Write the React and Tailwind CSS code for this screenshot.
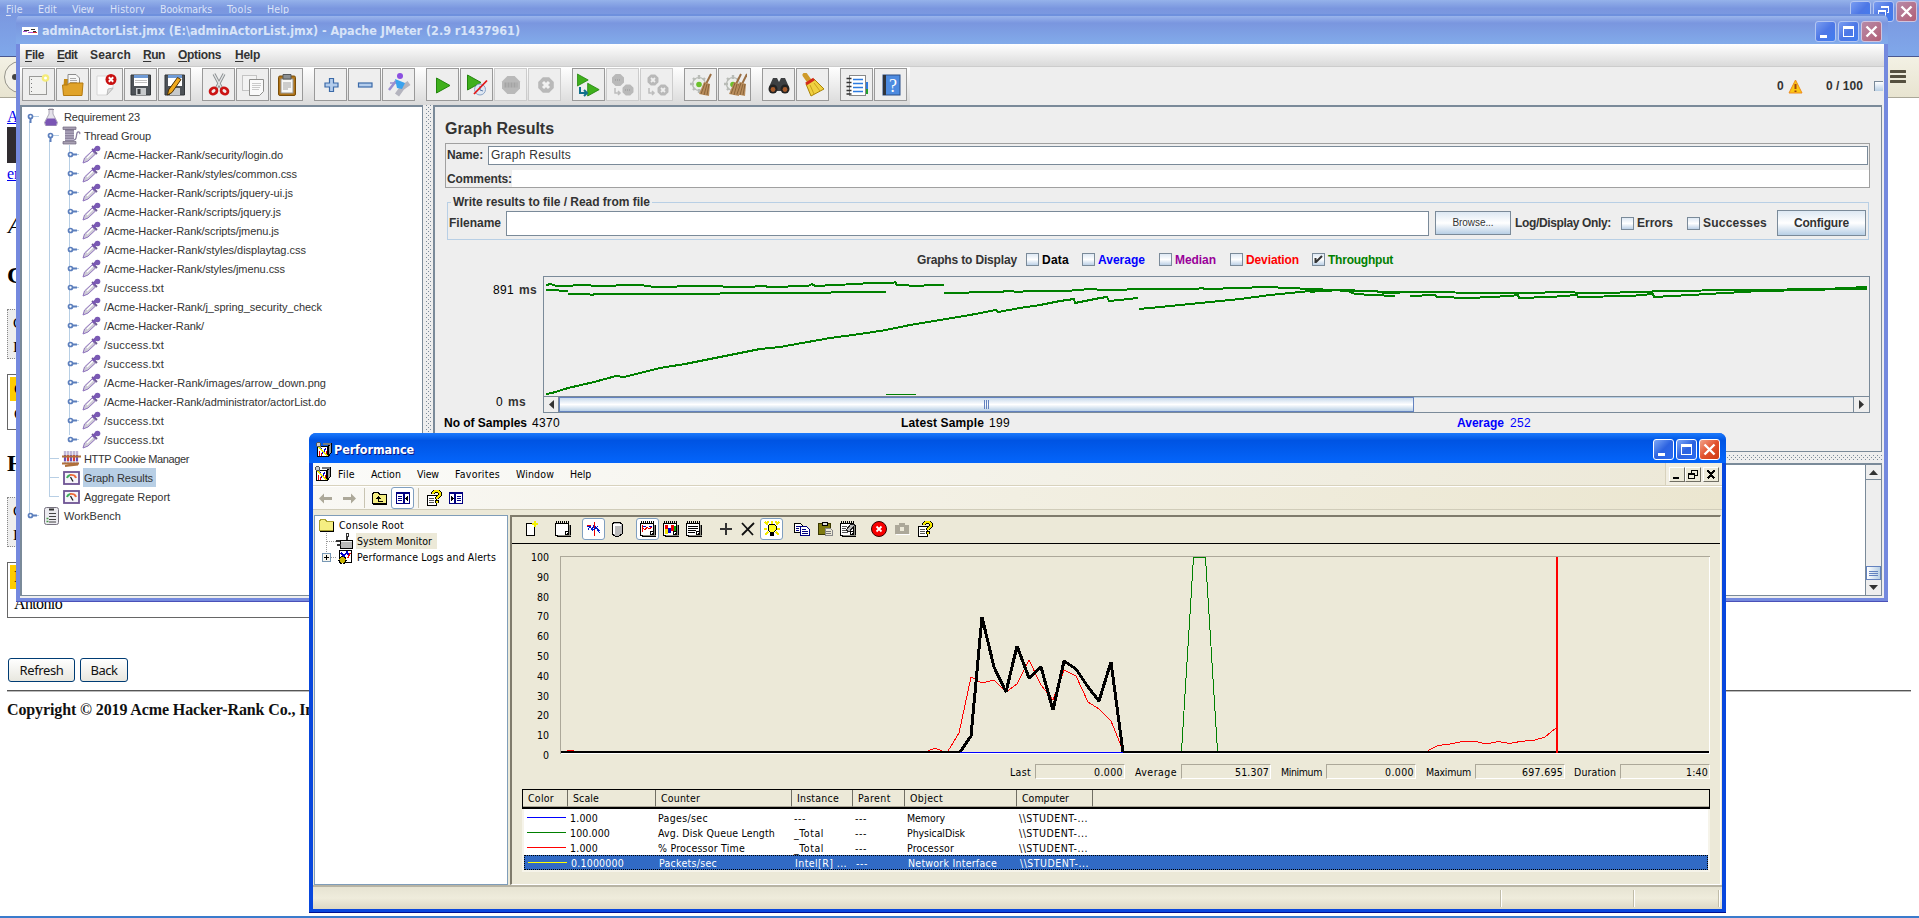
import React, { useLayoutEffect, useRef, useState } from "react";

const TAHOMA = "font-['DejaVu_Sans_Condensed',sans-serif] text-[10.5px]";
const ARIAL = "font-['Liberation_Sans',sans-serif]";
const SERIF = "font-['Liberation_Serif',serif]";

/* Single line of text spaced out to an exact advance width. */
function T({ w, className = "", children }) {
  const ref = useRef(null);
  const [ls, setLs] = useState(0);
  useLayoutEffect(() => {
    const n = ref.current.textContent.length;
    setLs((w - ref.current.getBoundingClientRect().width) / n);
  }, [w]);
  return (
    <span className={`inline-block shrink-0 whitespace-nowrap ${className}`} style={{ width: w }}>
      <span ref={ref} style={{ letterSpacing: ls }}>{children}</span>
    </span>
  );
}

/* ---------- caption buttons ---------- */
function Glyph({ kind }) {
  return (
    <svg width="19" height="19" viewBox="0 0 19 19" fill="none" stroke="#fff" shapeRendering="crispEdges">
      {kind === "min" && <path d="M4 14h7" strokeWidth="3" />}
      {kind === "max" && <path d="M4 5h11M4.500 4v11M14.500 4v11M4 14.500h11" strokeWidth="1.200" />}
      {kind === "max" && <path d="M4 5h11" strokeWidth="3" />}
      {kind === "restore" && <path d="M7 4.500h8M7 5.500h8M14.500 4v7M4 8.500h8M4 9.500h8M4.500 8v7M11.500 8v7M4 14.500h8M13 10.500h2" />}
      {kind === "close" && <path d="M4.500 4.500l10 10M14.500 4.500l-10 10" strokeWidth="2.400" shapeRendering="auto" />}
    </svg>
  );
}
function Cap({ kind, faded }) {
  const blue = faded
    ? "border-[#b3c6f2] bg-linear-to-br from-[#7a9cf0] via-[#4d77e6] to-[#3f7df0]"
    : "border-white bg-linear-to-br from-[#7ea6f5] via-[#2c62e0] to-[#2a6cf0]";
  const red = faded
    ? "border-[#d0c3dd] bg-linear-to-br from-[#b68aa8] to-[#b25f76]"
    : "border-white bg-linear-to-br from-[#f0a088] via-[#e2512c] to-[#cf3a12]";
  return (
    <div className={`flex h-[21px] w-[21px] items-center justify-center rounded-[3px] border ${kind === "close" ? red : blue}`}>
      {kind !== "none" && <Glyph kind={kind} />}
    </div>
  );
}

/* ---------- JMeter icons ---------- */
const S = ({ children, s = 24 }) => (
  <svg width={s} height={s} viewBox="0 0 24 24" fill="none">{children}</svg>
);
const Play = ({ x = 0, y = 0, k = 1 }) => (
  <path transform={`translate(${x} ${y}) scale(${k})`} d="M5.500 5l13.500 7.500-13.500 7.500z" fill="#3fb01c" stroke="#23850d" />
);
const Oct = ({ x, y, r }) => (
  <path transform={`translate(${x} ${y}) scale(${r})`} d="M-.4-1h.8l.6.6v.8l-.6.6h-.8l-.6-.6v-.8z" fill="#b9b9b9" />
);
const Sheet = ({ x, y, w, h }) => (
  <path d={`M${x} ${y}h${w}v${h - 4}l-4 4h-${w - 4}z`} fill="#fafafa" stroke="#8f8f8d" />
);
const Gear = () => (
  <g>
    <circle cx="10" cy="11" r="6.500" fill="#eceeeb" stroke="#b4b7b2" strokeWidth="1.200" />
    <path d="M10 2v4M10 16v4M1 11h4M4 5l2 2M4 17l2-2M16 5l-2 2" stroke="#b9bcb7" strokeWidth="2.400" />
    <circle cx="10" cy="11.500" r="2.800" fill="#6cc02b" />
  </g>
);
const Broom = ({ x = 0 }) => (
  <g transform={`translate(${x} 0)`}>
    <path d="M22 1l-5 10" stroke="#9a6e42" strokeWidth="2" />
    <path d="M15 9l6 2-1 12-10-2z" fill="#b98d5c" />
    <path d="M16 10l-4 11M18 11l-3 11M20 11l-2 11" stroke="#7e5930" strokeWidth=".8" />
  </g>
);
const toolIcons = {
  new: <S><rect x="2.500" y="3.500" width="17" height="18" fill="#f1f1ef" stroke="#9a9a98" /><path d="M4.500 6v14" stroke="#777" strokeDasharray="1 3" /><circle cx="18.500" cy="5" r="3.800" fill="#f5ec7a" /><circle cx="18.500" cy="5" r="1.500" fill="#fff" /></S>,
  open: <S><path d="M3 6h5l2 2h9v13H2z" fill="#c78a12" /><path d="M7 1.500h8l3.500 3.500v9H7z" fill="#f7f7f7" stroke="#8c8c8c" /><path d="M9 5.500h6M9 7.500h7M9 9.500h7" stroke="#aaa" /><path d="M1.500 12h5l2-2h13.500l-1 12.500h-18.500z" fill="#e0a32a" stroke="#b47a10" /></S>,
  close: <S><path d="M2 3h16v13l-6 6H2z" fill="#fbfbfb" stroke="#d6d6d6" /><path d="M12 22l1-6 5-1z" fill="#ddd" stroke="#bbb" /><circle cx="16" cy="6.500" r="5.500" fill="#c81010" /><path d="M13.800 4.300l4.400 4.400M18.200 4.300l-4.400 4.400" stroke="#fff" strokeWidth="2" /></S>,
  save: <S><path d="M2 2h19.500v20H2z" fill="#4d5257" stroke="#33373a" /><path d="M5 2h14v11H5z" fill="#fff" /><path d="M5 2h14v3H5z" fill="#6f9bd6" /><path d="M6 7.500h12M6 9.500h12" stroke="#c0c0c0" /><path d="M7 15h10v7H7z" fill="#c6c9cb" /><path d="M8.500 16h3v5h-3z" fill="#3b3f42" /></S>,
  saveAs: <S><path d="M2 2h19.500v20H2z" fill="#4d5257" stroke="#33373a" /><path d="M5 2h14v11H5z" fill="#fff" /><path d="M5 2h14v3H5z" fill="#6f9bd6" /><path d="M7 15h10v7H7z" fill="#c6c9cb" /><path d="M14.500 4.500l3.500 2-9 13-4.500 2.500 1-5z" fill="#f0a91e" stroke="#4b2f04" /></S>,
  cut: <S><path d="M7 1l8 15M17 1L9 16" stroke="#8c9092" strokeWidth="3.200" /><path d="M7 1l8 15M17 1L9 16" stroke="#e2e4e5" strokeWidth="1.400" /><ellipse cx="6.500" cy="18" rx="3.600" ry="3" stroke="#cc1414" strokeWidth="2.800" transform="rotate(-35 6.500 18)" /><ellipse cx="17.500" cy="18" rx="3.600" ry="3" stroke="#cc1414" strokeWidth="2.800" transform="rotate(35 17.500 18)" /></S>,
  copy: <S><rect x="1.500" y="2.500" width="14" height="15" fill="#f3f3f3" stroke="#c4c4c4" /><Sheet x={8.5} y={6.5} w={14} h={16} /><path d="M11 10.500h9M11 12.500h9M11 14.500h8M11 16.500h7" stroke="#c9c9c9" /></S>,
  paste: <S><rect x="3.500" y="3" width="17" height="19.500" rx="1.500" fill="#b07418" stroke="#7a4d08" /><rect x="6" y="6" width="12" height="14" fill="#f7f7f5" stroke="#999" /><path d="M8 1.500h8V6H8z" fill="#8b8f92" stroke="#55585a" /><path d="M8 10h8M8 12h8M8 14h8M8 16h5" stroke="#a2a2a2" /></S>,
  plus: <S><path d="M10.500 5.500h4v4.500h4.500v4h-4.500v4.500h-4V14H6v-4h4.500z" fill="#b4cdec" stroke="#3b6aa8" strokeWidth="1.200" /></S>,
  minus: <S><rect x="5.500" y="10" width="13.500" height="4" fill="#b4cdec" stroke="#3b6aa8" strokeWidth="1.200" /></S>,
  toggle: <S><path d="M22 10l-7 5-5 7" stroke="#b4b4be" strokeWidth="5" /><path d="M9 8L2 17" stroke="#9a8ed0" strokeWidth="2.500" /><path d="M3 10h7" stroke="#9a8ed0" strokeWidth="1.500" /><circle cx="13" cy="3" r="3" fill="#8b4fe0" /><path d="M8 6l10 4-3 6-5-1z" fill="#3aa2ee" /></S>,
  start: <S><Play /></S>,
  startNo: <S><Play x={-3} y={-3} /><circle cx="15" cy="16.500" r="5.500" fill="#dfe7f2" stroke="#8ba4c6" /><path d="M15 13v4l3 1" stroke="#5d7dab" /><path d="M22 7.500L9 21" stroke="#e01515" strokeWidth="1.800" /></S>,
  stop: <S><Oct x={12} y={12} r={9} /><path d="M5.500 12h13" stroke="#a4a4a4" strokeWidth="5" strokeDasharray="2 1" /></S>,
  shut: <S><Oct x={13} y={12} r={7.800} /><path d="M10 9l6 6M16 9l-6 6" stroke="#f1f1f1" strokeWidth="3" /></S>,
  rStart: <S><Play x={-4} y={-3} k={0.8} /><Play x={6} y={6} k={0.85} /><path d="M3 14v6h6M7 17l3 3-3 3" stroke="#11708c" strokeWidth="2" /></S>,
  rStop: <S><Oct x={7} y={7} r={6} /><Oct x={17} y={17} r={5.5} /><path d="M4 15v5h5M7 18l2 2-2 2" stroke="#bdbdbd" strokeWidth="1.500" /><path d="M4 7h6M14 17h6" stroke="#a6a6a6" strokeWidth="2" strokeDasharray="1 1" /></S>,
  rShut: <S><Oct x={8} y={7} r={5.5} /><Oct x={18} y={17} r={5.5} /><path d="M4 15v5h5M7 18l2 2-2 2" stroke="#bdbdbd" strokeWidth="1.500" /><path d="M6 5l4 4M10 5l-4 4M16 15l4 4M20 15l-4 4" stroke="#efefef" strokeWidth="1.800" /></S>,
  clear: <S><Gear /><Broom /></S>,
  clearAll: <S><Gear /><Broom x={-4} /><Broom x={2} /></S>,
  find: <S><path d="M2 14l4-9h4l2 4 2-4h4l4 9v4H2z" fill="#3d4042" /><circle cx="6" cy="16" r="4.500" fill="#222" /><circle cx="18" cy="16" r="4.500" fill="#222" /><circle cx="6" cy="16.500" r="2.400" fill="#a55a2a" /><circle cx="18" cy="16.500" r="2.400" fill="#a55a2a" /></S>,
  reset: <S><path d="M4 2l5 7" stroke="#cf9a2a" strokeWidth="5" strokeLinecap="round" /><path d="M5 11l8-5 10 10-13 7z" fill="#f0d040" stroke="#a88209" /><path d="M5 11l8-5" stroke="#d42a1a" strokeWidth="3" /><path d="M9 12l4 9M13 10l6 8" stroke="#c9a21c" /></S>,
  func: <S><rect x="20" y="9" width="3" height="7" fill="#2d7be0" /><rect x="20" y="16" width="3" height="5" fill="#21a02c" /><rect x="4.500" y="2.500" width="16" height="20" fill="#fff" stroke="#888" /><path d="M8 6.500h10M8 10.500h10M8 14.500h10M8 18.500h10" stroke="#2d7be0" strokeWidth="1.500" /><path d="M1.500 5.500h5M1.500 9.500h5M1.500 13.500h5M1.500 17.500h5M1.500 21h5" stroke="#333" strokeWidth="1.500" /></S>,
  help: <S><rect x="4" y="2" width="17" height="20" fill="#4d8be0" stroke="#2a4f88" /><rect x="4" y="2" width="3" height="20" fill="#30343a" /><text x="14" y="18.500" textAnchor="middle" fontFamily="Liberation Serif" fontSize="18" fill="#fff">?</text></S>,
};
const toolGroups = [
  ["new", "open", "close", "save", "saveAs"],
  ["cut", "copy", "paste"],
  ["plus", "minus", "toggle"],
  ["start", "startNo", "stop", "shut"],
  ["rStart", "rStop", "rShut"],
  ["clear", "clearAll"],
  ["find", "reset"],
  ["func", "help"],
];
const disabled = ["stop", "shut", "rStop", "rShut"];

function Handle({ open }) {
  return (
    <svg width="13" height="19" viewBox="0 0 13 19" fill="none">
      {open ? <path d="M5 9.500h8" stroke="#b8cfe5" /> : <path d="M9 9.500h4" stroke="#b8cfe5" />}
      {open ? <path d="M4.500 11v5" stroke="#5c7fbd" strokeWidth="2" /> : <path d="M6 9.500h5" stroke="#5c7fbd" strokeWidth="2" />}
      <circle cx="4.500" cy="9.500" r="2" fill="#fff" stroke="#5c7fbd" strokeWidth="1.700" />
    </svg>
  );
}
const treeIcons = {
  flask: <svg width="14" height="18" viewBox="0 0 14 18"><path d="M5 1h4v5l4.500 8.500-1 3h-11l-1-3L5 6z" fill="#e4e2ea" stroke="#9a96a6" strokeWidth=".8" /><path d="M3 10.500h8l2 4-1 3H2l-1-3z" fill="#7a55b4" /><path d="M4 1.500h6" stroke="#8a8694" /></svg>,
  spool: <svg width="19" height="19" viewBox="0 0 19 19"><path d="M3 3h9v12H3z" fill="#8f86a0" /><path d="M3 6h9M3 8.500h9M3 11h9M3 13.500h9" stroke="#b8b0c6" /><path d="M1 1h13v2.500H1zM1 15.500h13V18H1z" fill="#a79fb2" stroke="#6e667c" strokeWidth=".7" /><path d="M12 14c4 0 1-9 5-8 1 .4 1 1.500.5 2" fill="none" stroke="#8a7fa0" strokeWidth="1.300" /></svg>,
  dropper: <svg width="19" height="19" viewBox="0 0 19 19"><path d="M1 18l1.500-5L10 6l3.500 3-7.500 7z" fill="#cfccd6" stroke="#8e72bd" strokeWidth="1" /><path d="M5 13l6-6" stroke="#fff" strokeWidth="1.300" /><path d="M10 4l5 5" stroke="#6d5a90" strokeWidth="1.800" /><path d="M11 6.500l4-4" stroke="#7a55b4" strokeWidth="3" /><circle cx="15.500" cy="3.500" r="2.800" fill="#7a5ab4" /></svg>,
  cookie: <svg width="19" height="17" viewBox="0 0 19 17"><path d="M3 1v12M6 1v12M9 1v12M12 1v12M15 1v12" stroke="#c0b8d8" strokeWidth="2.400" /><path d="M3 5v6M9 5v6M15 5v6" stroke="#6a4fb4" strokeWidth="2" /><path d="M6 5v6M12 5v6" stroke="#d83a3a" strokeWidth="2" /><path d="M0 6.500h19M0 13.500h17M3 16l13-1.500" stroke="#b0703a" strokeWidth="2" /></svg>,
  gauge: <svg width="17" height="14" viewBox="0 0 17 14"><rect x="1" y="1" width="15" height="12" fill="#f6f4fa" stroke="#6e5494" strokeWidth="1.800" /><path d="M4 7a5 4 0 0 1 3-3" stroke="#3fae5c" strokeWidth="2" fill="none" /><path d="M7 4a5 4 0 0 1 6 3" stroke="#ee6a3a" strokeWidth="2" fill="none" /><path d="M7.500 6l2.500 4.500" stroke="#222" strokeWidth="1.300" /></svg>,
  bench: <svg width="15" height="18" viewBox="0 0 15 18"><rect x=".5" y=".5" width="14" height="17" rx="2" fill="#ecebf0" stroke="#77727f" /><path d="M5 2.500h5" stroke="#333" strokeWidth="2" /><path d="M5 6.500h7M5 9.500h7M5 12.500h7M5 15h7" stroke="#444" strokeWidth="1.200" /><path d="M2.500 11.500h2M2.500 14.500h2" stroke="#4a9a4a" strokeWidth="1.400" /></svg>,
};
const samplers = [
  ["/Acme-Hacker-Rank/security/login.do", 179],
  ["/Acme-Hacker-Rank/styles/common.css", 193],
  ["/Acme-Hacker-Rank/scripts/jquery-ui.js", 189],
  ["/Acme-Hacker-Rank/scripts/jquery.js", 177],
  ["/Acme-Hacker-Rank/scripts/jmenu.js", 175],
  ["/Acme-Hacker-Rank/styles/displaytag.css", 202],
  ["/Acme-Hacker-Rank/styles/jmenu.css", 181],
  ["/success.txt", 60],
  ["/Acme-Hacker-Rank/j_spring_security_check", 218],
  ["/Acme-Hacker-Rank/", 100],
  ["/success.txt", 60],
  ["/success.txt", 60],
  ["/Acme-Hacker-Rank/images/arrow_down.png", 222],
  ["/Acme-Hacker-Rank/administrator/actorList.do", 222],
  ["/success.txt", 60],
  ["/success.txt", 60],
];

function Node({ level, icon, label, w, handle, selected }) {
  const pad = level === 0 ? "pl-[4px]" : level === 1 ? "pl-[24px]" : "pl-[44px]";
  return (
    <div className={`flex h-[19px] items-center ${pad}`}>
      <span className="w-[13px] shrink-0">
        {handle ? <Handle open={handle === "open"} /> : <svg width="13" height="19"><path d="M4 9.500h9" stroke="#b8cfe5" /></svg>}
      </span>
      <span className="flex w-[24px] shrink-0 items-center justify-center">{treeIcons[icon]}</span>
      <span className={`flex h-[19px] items-center pl-px ${selected ? "bg-[#b8cfe5] pr-[3px]" : ""}`}><T w={w}>{label}</T></span>
    </div>
  );
}

function JTree() {
  return (
    <div className="relative h-full w-[403px] border-l-2 border-t-2 border-r border-b border-[#7a8a99] bg-white text-[11px] text-[#333]">
      <svg className="absolute left-0 top-0" width="120" height="460" stroke="#b8cfe5">
        <path d="M7.500 14v392M27.500 33v357M47.500 38v290" />
      </svg>
      <div className="relative">
        <Node level={0} icon="flask" label="Requirement 23" w={76} handle="open" />
        <Node level={1} icon="spool" label="Thread Group" w={67} handle="open" />
        {samplers.map(([s, w], i) => <Node key={i} level={2} icon="dropper" label={s} w={w} handle="closed" />)}
        <Node level={1} icon="cookie" label="HTTP Cookie Manager" w={105} />
        <Node level={1} icon="gauge" label="Graph Results" w={69} selected />
        <Node level={1} icon="gauge" label="Aggregate Report" w={86} />
        <Node level={0} icon="bench" label="WorkBench" w={57} handle="closed" />
      </div>
    </div>
  );
}

function Check({ on }) {
  return (
    <span className="flex h-[13px] w-[13px] shrink-0 items-center justify-center border border-[#7a8a99] bg-linear-to-b from-[#dfe9f4] via-white to-[#bcd0e6]">
      {on && <svg width="9" height="9" viewBox="0 0 9 9" fill="none" stroke="#333" strokeWidth="2"><path d="M1.500 3v5M2 7l6-6" /></svg>}
    </span>
  );
}

const throughput = [
  "546,285 551,284 556,286 590,285 592,286 640,285 655,287 700,286 746,287 765,286 768,287 808,286 812,284 815,286 856,284 862,284 864,283 893,283 895,282 897,285 920,286 928,285 944,285",
  "546,290 558,290 560,291 568,291",
  "568,294 588,294 592,295 595,294 718,294 722,293 830,293 832,292 886,292",
  "944,293 968,293 970,292 1002,292 1005,291 1022,292 1024,291 1066,291 1090,289 1104,290 1150,289 1198,289 1200,288 1207,289 1240,288 1265,287 1290,288 1310,289 1335,290 1374,291 1380,292 1530,293 1560,292 1590,293 1650,292 1655,291 1750,290 1825,289 1867,287",
  "546,394 552,393 568,388 594,382 616,376 624,377 660,368 685,364 700,361 730,355 760,349 780,347 830,338 860,334 886,330 910,325 940,320 970,315 996,310 998,312 1020,308 1040,305 1060,301 1074,299 1075,303 1085,301 1100,298 1107,297 1109,301 1120,300 1138,298",
  "1139,309 1160,307 1200,303 1240,299 1270,295 1300,292 1310,291 1320,291 1345,290 1355,294 1372,295 1395,296",
  "1410,296 1435,295 1437,297 1470,298 1510,296 1518,295 1519,298 1550,297 1577,295 1578,297 1630,296 1653,294 1654,297 1690,295 1725,293 1760,291 1810,290 1840,289 1867,289",
  "1310,292 1330,290 1350,291 1375,291 1385,293 1400,293",
];

function HScroll() {
  return (
    <div className="flex h-[16px] w-full border-t border-[#7a8a99]">
      <div className="flex w-[15px] items-center justify-center border-r border-[#7a8a99] bg-[#eee]"><svg width="5" height="9"><path d="M5 0v9L0 4.500z" fill="#333" /></svg></div>
      <div className="flex w-[855px] items-center justify-center border border-[#6382bf] bg-linear-to-b from-[#c9daec] via-white to-[#b8cfe5]">
        <svg width="7" height="9" stroke="#6382bf"><path d="M1.500 0v9M3.500 0v9M5.500 0v9" /></svg>
      </div>
      <div className="flex-1 border-t border-[#b8cfe5] bg-[#eee]" />
      <div className="flex w-[16px] items-center justify-center border-l border-[#7a8a99] bg-[#eee]"><svg width="5" height="9"><path d="M0 0v9l5-4.500z" fill="#333" /></svg></div>
    </div>
  );
}

function GraphResults() {
  return (
    <div className="flex h-[347px] w-[1449px] flex-col border-l-2 border-t-2 border-r border-b border-[#7a8a99] bg-[#eee] text-[12px] font-bold text-[#333]">
      <div className="flex h-[36px] shrink-0 items-center pl-[10px] pt-[7px] text-[16px]"><T w={109}>Graph Results</T></div>
      <div className="ml-[10px] flex h-[45px] w-[1425px] shrink-0 flex-col border border-[#a0a0a0] pl-px">
        <div className="flex h-[22px] items-center">
          <T w={36}>Name:</T>
          <div className="ml-auto mr-px flex h-[19px] w-[1380px] items-center border border-[#7a8a99] bg-white pl-[2px] font-normal text-[#333]"><T w={80}>Graph Results</T></div>
        </div>
        <div className="mt-auto flex h-[17px] items-center">
          <T w={65}>Comments:</T>
          <div className="h-full flex-1 bg-white" />
        </div>
      </div>
      <fieldset className="ml-[12px] mt-[7px] h-[45px] w-[1422px] shrink-0 border border-[#b8cfe5]">
        <legend className="ml-[3px] flex h-[14px] items-center px-[2px]"><T w={197}>Write results to file / Read from file</T></legend>
        <div className="flex h-[28px] items-center pl-px">
          <T w={52}>Filename</T>
          <div className="ml-[5px] h-[25px] w-[923px] border border-[#7a8a99] bg-white" />
          <div className="ml-[6px] flex h-[24px] w-[76px] items-center justify-center border border-[#7a8a99] bg-linear-to-b from-[#dde8f3] via-white to-[#b8cfe5] text-[10px] font-normal"><T w={41}>Browse...</T></div>
          <T w={96} className="ml-[4px]">Log/Display Only:</T>
          <span className="ml-[10px] flex items-center gap-[3px]"><Check /><T w={36}>Errors</T></span>
          <span className="ml-[14px] flex items-center gap-[3px]"><Check /><T w={64}>Successes</T></span>
          <div className="ml-[10px] flex h-[26px] w-[89px] items-center justify-center border border-[#7a8a99] bg-linear-to-b from-[#dde8f3] via-white to-[#b8cfe5]"><T w={55}>Configure</T></div>
        </div>
      </fieldset>
      <div className="flex h-[36px] shrink-0 items-center pl-[482px] pt-[3px]">
        <T w={100}>Graphs to Display</T>
        <span className="ml-[9px] flex items-center gap-[3px] text-black"><Check /><T w={27}>Data</T></span>
        <span className="ml-[13px] flex items-center gap-[3px] text-[#0000ff]"><Check /><T w={47}>Average</T></span>
        <span className="ml-[14px] flex items-center gap-[3px] text-[#990099]"><Check /><T w={41}>Median</T></span>
        <span className="ml-[14px] flex items-center gap-[3px] text-[#ff0000]"><Check /><T w={53}>Deviation</T></span>
        <span className="ml-[13px] flex items-center gap-[3px] text-[#008000]"><Check on /><T w={65}>Throughput</T></span>
      </div>
      <div className="flex h-[137px] shrink-0">
        <div className="flex w-[108px] shrink-0 flex-col justify-between pb-[4px] pt-[7px]">
          <div className="flex h-[14px] items-center gap-[5px] pl-[58px]"><T w={21} className="font-normal text-black">891</T><T w={18}>ms</T></div>
          <div className="flex h-[14px] items-center gap-[5px] pl-[61px]"><T w={7} className="font-normal text-black">0</T><T w={18}>ms</T></div>
        </div>
        <div className="flex w-[1327px] flex-col border border-[#7a8a99]">
          <svg width="1325" height="119" viewBox="544 277 1325 119" fill="none" stroke="#008000" strokeWidth="2" shapeRendering="crispEdges">
            {throughput.map((p, i) => <polyline key={i} points={p} />)}
            <path d="M886 394.500h30" strokeWidth="1" />
          </svg>
          <HScroll />
        </div>
      </div>
      <div className="flex h-[20px] shrink-0 items-center pl-[9px] text-black">
        <T w={83}>No of Samples</T><T w={28} className="ml-[5px] font-normal">4370</T>
        <T w={83} className="ml-[341px]">Latest Sample</T><T w={21} className="ml-[5px] font-normal">199</T>
        <T w={47} className="ml-[447px] text-[#0000ff]">Average</T><T w={21} className="ml-[6px] font-normal text-[#0000ff]">252</T>
      </div>
    </div>
  );
}

const jmenu = [["F", "ile", 19, "w-[32px]"], ["E", "dit", 20, "w-[33px]"], ["", "Search", 41, "w-[53px]"], ["R", "un", 22, "w-[35px]"], ["O", "ptions", 43, "w-[57px]"], ["H", "elp", 25, "w-[30px]"]];

function JMeter() {
  return (
    <div className={`absolute left-[16px] top-[14px] flex h-[588px] w-[1872px] flex-col overflow-hidden rounded-t-[7px] border-b border-[#4a50b8] bg-[#7489de] ${ARIAL}`}>
      <div className="flex h-[30px] shrink-0 items-center border-t-2 border-[#6e90dd] bg-linear-to-b from-[#9ab5ec] via-[#7a96df] via-25% to-[#82abea] pl-[6px] pr-[6px] pt-[2px]">
        <svg width="16" height="8" shapeRendering="crispEdges"><path d="M0 0h16v8H0z" fill="#fff" /><path d="M2 3h5M9 2h4M11 4h3" stroke="#333" /><path d="M1 4.500h4M6 5.500h6" stroke="#b050d0" /><path d="M11 5.500h4" stroke="#e03030" /></svg>
        <T w={478} className="ml-[4px] font-['DejaVu_Sans_Condensed',sans-serif] text-[12.5px] font-bold text-[#d8e4f8]">adminActorList.jmx (E:\adminActorList.jmx) - Apache JMeter (2.9 r1437961)</T>
        <div className="ml-auto flex gap-[2px] pt-px"><Cap kind="min" faded /><Cap kind="max" faded /><Cap kind="close" faded /></div>
      </div>
      <div className="mx-[4px] flex h-[554px] shrink-0 flex-col bg-[#eee]">
        <div className="flex h-[23px] shrink-0 items-center border-b border-[#ccc] bg-linear-to-b from-white to-[#dadada] pl-[5px] text-[12px] font-bold text-[#333]">
          {jmenu.map(([u, rest, w, box]) => (
            <span key={rest} className={`shrink-0 ${box}`}><T w={w}><span className="underline underline-offset-2">{u}</span>{rest}</T></span>
          ))}
        </div>
        <div className="flex h-[38px] shrink-0">
          <div className="flex w-[890px] items-start gap-[11px] bg-linear-to-b from-white to-[#dadada] pl-[2px] pt-px">
            {toolGroups.map((g) => (
              <div key={g[0]} className="flex gap-px">
                {g.map((n) => (
                  <div key={n} className={`flex h-[33px] w-[33px] items-center justify-center border bg-[#eee] ${disabled.includes(n) ? "border-[#ccc]" : "border-[#999]"}`}>{toolIcons[n]}</div>
                ))}
              </div>
            ))}
          </div>
          <div className="flex flex-1 items-center text-[12px] font-bold text-[#333]">
            <T w={7} className="ml-[867px]">0</T>
            <svg className="ml-[4px]" width="15" height="15" viewBox="0 0 15 15"><path d="M7.500 1l6.500 13H1z" fill="#fbc712" stroke="#ee8a1c" strokeLinejoin="round" /><path d="M7.500 5v5M7.500 11.500v1.500" stroke="#a1440c" strokeWidth="2" /></svg>
            <T w={37} className="ml-[23px]">0 / 100</T>
            <div className="ml-[11px] h-[10px] w-[9px] border-l border-t border-[#7a8a99] bg-linear-to-b from-white to-[#b8cfe5]" />
          </div>
        </div>
        <div className="flex min-h-0 flex-1">
          <div className="h-[491px]"><JTree /></div>
          <div className="w-[10px] px-[3px]"><svg width="5" height="491"><defs><pattern id="dv" width="4" height="4" patternUnits="userSpaceOnUse"><path d="M0 0h1v1H0zM2 2h1v1H2z" fill="#7a8a99" /></pattern></defs><rect width="5" height="491" fill="url(#dv)" /></svg></div>
          <div className="flex w-[1451px] flex-col">
            <GraphResults />
            <div className="h-[11px] pt-[3px]"><svg width="1449" height="6"><rect width="1449" height="6" fill="url(#dv)" /></svg></div>
            <div className="flex h-[133px] w-[1449px] justify-end border border-t-2 border-[#7a8a99] bg-white">
              <div className="flex w-[16px] flex-col border-l border-[#7a8a99] bg-[#eee]">
                <div className="flex h-[15px] items-center justify-center border-b border-[#7a8a99]"><svg width="9" height="5"><path d="M0 5h9L4.500 0z" fill="#333" /></svg></div>
                <div className="h-[86px]" />
                <div className="flex h-[14px] items-center justify-center border border-[#6382bf] bg-linear-to-r from-white to-[#b8cfe5]"><svg width="9" height="7" stroke="#6382bf"><path d="M0 1.500h9M0 3.500h9M0 5.500h9" /></svg></div>
                <div className="flex flex-1 items-center justify-center"><svg width="9" height="5"><path d="M0 0h9L4.500 5z" fill="#333" /></svg></div>
              </div>
            </div>
          </div>
        </div>
      </div>
    </div>
  );
}

/* ---------- Performance console icons ---------- */
const P = ({ children }) => <svg width="16" height="16" viewBox="0 0 16 16" fill="none" shapeRendering="crispEdges">{children}</svg>;
const PerfLogo = () => (
  <P><path d="M1.500 4.500h10v10h-10z" fill="#fff" stroke="#000" /><path d="M12 4l3-2v9l-3 4z" fill="#999" stroke="#000" /><path d="M3 14V9M5 14v-3M8 12v-3M10 14v-5" stroke="#e00" /><path d="M5 6l2 5 3-5" stroke="#00c" strokeWidth="1.300" /><path d="M3 5l8 9" stroke="#ee0" strokeWidth="1.500" /><path d="M1 2l4 3M7 2.500l8-1" stroke="#777" strokeWidth="2" /><circle cx="2.500" cy="2.500" r="2" fill="#ccc" stroke="#555" /></P>
);
const Pad = ({ children }) => (
  <P><path d="M2 4h14v12H2z" fill="#000" /><path d="M.5 2.500h13v9l-3 3H.5z" fill="#fff" stroke="#000" /><path d="M3 14.500h13M14.500 4v11" stroke="#8a8a80" /><path d="M10.500 14v-3.500h3" stroke="#000" /><path d="M1 1.500h13" stroke="#000" strokeWidth="3" strokeDasharray="1 1" />{children}</P>
);
const HelpDoc = () => (
  <P><path d="M1 5h9v10H1z" fill="#fff" stroke="#000" /><path d="M3 8.500h5M3 10.500h5M3 12.500h5" stroke="#555" /><path d="M7 4c0-4 7-4 7 0 0 3-3 2-3 5M11 10v3" stroke="#000" strokeWidth="4" /><path d="M7 4c0-4 7-4 7 0 0 3-3 2-3 5M11 10.500v2" stroke="#f4e800" strokeWidth="2" /></P>
);
const Folder = ({ up }) => (
  <P><path d="M.5 4.500l1-2h5l1 2h7v9H.5z" fill="#f5ee82" stroke={up ? "#000" : "#a8a030"} /><path d="M14.500 5v9.500H1" stroke="#000" />{up && <path d="M6 11.500h5M6.500 11V6M4 8.500h5M5 7.500h3" stroke="#000" />}</P>
);
const Pane = ({ flip }) => (
  <P><g transform={flip ? "translate(16 0) scale(-1 1)" : undefined}><path d="M1.500 2.500h13v11h-13z" fill="#fff" stroke="#000080" /><path d="M1 3h14" stroke="#000080" strokeWidth="2" /><path d="M8.500 3v11M9.500 3v11" stroke="#000080" /><path d="M3 6.500h4M3 8.500h4M3 10.500h4" stroke="#000080" /><path d="M13 5v7L10 8.500z" fill="#000" /></g></P>
);
const Btn = ({ on, className = "", children }) => (
  <span className={`flex h-[22px] w-[23px] shrink-0 items-center justify-center rounded-[3px] ${on ? "border border-[#7f9fc0] bg-white" : ""} ${className}`}>{children}</span>
);
const Arrow = ({ flip }) => (
  <svg width="13" height="11" viewBox="0 0 13 11"><path transform={flip ? "translate(13 0) scale(-1 1)" : undefined} d="M0 5.500L5 .5v3.500h8v3H5v3.500z" fill="#aca899" /></svg>
);

function SysToolbar() {
  return (
    <div className="flex h-[27px] shrink-0 items-center border-b border-black pb-[3px] pl-[7px]">
      <Btn><P><path d="M3.500 2.500h8v12h-8z" fill="#fff" stroke="#000" /><path d="M9 2.500h6M12 0v6" stroke="#f4f000" strokeWidth="2" /></P></Btn>
      <Btn className="ml-[9px]"><Pad /></Btn>
      <Btn on className="ml-[8px]"><P><path d="M1 5h3l2 4 2-5 2 3 4 5M2 9l3-5" stroke="#0018c8" /><path d="M8.500 1v14" stroke="#e00" /><path d="M6 10l6-5M10 6l4 4" stroke="#0018c8" /><path d="M1 4h4" stroke="#e00" /></P></Btn>
      <Btn><P><path d="M3 3l3-2h4l3 2v10l-3 2H6l-3-2z" fill="#bbb" stroke="#000" /><path d="M4 4h8M5 5v8" stroke="#fff" strokeWidth="2" /></P></Btn>
      <Btn on className="ml-[8px]"><Pad><path d="M2.500 4v7M2 6l3 3 2-3 2 2 3-2" stroke="#e00" strokeWidth="1.300" /><path d="M3 5.500h3M9 5.500h3" stroke="#00c" /></Pad></Btn>
      <Btn><Pad><path d="M2 7h3v6H2z" fill="#f0e000" /><path d="M2 4h3v4H2z" fill="#e00" /><path d="M5 7h3v5H5z" fill="#00c" /><path d="M8 4h3v6H8z" fill="#e00" /><path d="M11 5h2v5h-2z" fill="#0a0" /></Pad></Btn>
      <Btn><Pad><path d="M2 5.500h10M2 7.500h10M2 9.500h8M2 11.500h7" stroke="#000" /></Pad></Btn>
      <Btn className="ml-[9px]"><P><path d="M8 2v12M2 8h12" stroke="#333" strokeWidth="2" /></P></Btn>
      <Btn className="-ml-px"><P><path d="M2 2l11 12M14 2L2 14" stroke="#111" strokeWidth="1.800" shapeRendering="auto" /></P></Btn>
      <Btn on className="ml-px"><P><path d="M1 1l3 3M8 0v3M15 1l-3 3M0 8h3M13 8h3M1 14l3-3M15 14l-3-3M4 0v2M12 0v2" stroke="#f4ec00" strokeWidth="1.500" /><path d="M6 3h4l2 2v4l-2 2H6L4 9V5z" fill="#ffff20" stroke="#000" /><path d="M6 12h4M6 14h4" stroke="#000" strokeWidth="2" /></P></Btn>
      <Btn className="ml-[7px]"><P><path d="M.5 2.500h6l2 2v7h-8z" fill="#fff" stroke="#000" /><path d="M6.500 5.500h6l3 3v6h-9z" fill="#fff" stroke="#000080" /><path d="M2 5.500h4M2 7.500h3M2 9.500h3M8 8.500h4M8 10.500h6M8 12.500h6" stroke="#000080" /></P></Btn>
      <Btn><P><path d="M1.500 2.500h12v11h-12z" fill="#7f7b10" stroke="#3a3800" /><path d="M5 1h5v3H5z" fill="#ddd" stroke="#000" /><path d="M8 7h5l2 2v5H8z" fill="#ece9d8" stroke="#888" /><path d="M9 10.500h5M9 12.500h5" stroke="#777" /></P></Btn>
      <Btn><Pad><path d="M2 5.500h5M2 7.500h4M2 9.500h4M2 11.500h6" stroke="#555" /><path d="M6 9l5-6 4 1-6 7z" fill="#bbb" stroke="#222" /></Pad></Btn>
      <Btn className="ml-[8px]"><svg width="16" height="16" viewBox="0 0 16 16"><circle cx="8" cy="8" r="7.500" fill="#f80000" stroke="#300" /><path d="M5.500 5.500l5 5M10.500 5.500l-5 5" stroke="#fff" strokeWidth="1.800" /></svg></Btn>
      <Btn><P><path d="M1 4h4V2h6v2h4v9H1z" fill="#aca899" /><path d="M6 6h4v4H6z" fill="#ece9d8" /><path d="M2 13.500h14V5" stroke="#fff" /></P></Btn>
      <Btn><HelpDoc /></Btn>
    </div>
  );
}

const stats = [["Last", 21, "0.000", 29, ""], ["Average", 42, "51.307", 34, "ml-[10px]"], ["Minimum", 41, "0.000", 29, "ml-[10px]"], ["Maximum", 45, "697.695", 41, "ml-[10px]"], ["Duration", 42, "1:40", 22, "ml-[9px]"]];
const cols = ["w-[45px]", "w-[88px]", "w-[136px]", "w-[61px]", "w-[52px]", "w-[112px]", "w-[76px]"];
const heads = [["Color", 26], ["Scale", 26], ["Counter", 39], ["Instance", 42], ["Parent", 33], ["Object", 33], ["Computer", 47]];
const rows = [
  ["#0000ff", [["1.000", 28], ["Pages/sec", 50], ["---", 12], ["---", 12], ["Memory", 38], ["\\\\STUDENT-...", 69]]],
  ["#008000", [["100.000", 40], ["Avg. Disk Queue Length", 117], ["_Total", 30], ["---", 12], ["PhysicalDisk", 58], ["\\\\STUDENT-...", 69]]],
  ["#ff0000", [["1.000", 28], ["% Processor Time", 87], ["_Total", 30], ["---", 12], ["Processor", 47], ["\\\\STUDENT-...", 69]]],
  ["#ffff00", [["0.1000000", 53], ["Packets/sec", 58], ["Intel[R] ...", 52], ["---", 12], ["Network Interface", 89], ["\\\\STUDENT-...", 69]]],
];

function Chart() {
  return (
    <svg className="mt-[6px]" width="1150" height="199" viewBox="560 556 1150 199" fill="none" shapeRendering="crispEdges">
      <path d="M560.500 754V556.500H1710" stroke="#aca899" />
      <path d="M1709.500 557v197M561 753.500h1149" stroke="#fff" />
      <path d="M960 752.500h163" stroke="#0000ff" />
      <polyline points="1181.500,751 1193.500,557.500 1205.500,557.500 1217.500,751" stroke="#008000" />
      <g stroke="#ff0000">
        <path d="M567 750.500h7" strokeWidth="2" />
        <polyline points="928,750.500 935,748.500 942,750.500" />
        <polyline points="948,751 959,733 971,677 982,683 994,680 1006,692 1017,684 1029,660 1041,685 1053,700 1064,670 1076,676 1088,702 1099,709 1111,721 1122,748" />
        <polyline points="1428,750.500 1438,745.500 1450,744 1462,741.500 1476,741.500 1486,744 1498,741.500 1510,743.500 1520,741.500 1535,740 1545,737 1556,728" />
      </g>
      <g stroke="#000" strokeWidth="2">
        <path d="M561 752h399M1123 752h586" />
        <polyline strokeWidth="3" strokeLinejoin="bevel" points="960,752 971,736 982,617 994,667 1006,692 1017,646 1029,678 1041,667 1053,710 1064,661 1076,669 1088,687 1099,701 1111,662 1123,752" />
      </g>
      <path d="M1557 557v196" stroke="#ff0000" strokeWidth="2" />
    </svg>
  );
}

function SystemMonitor() {
  return (
    <div className="flex h-[370px] w-[1211px] flex-col border-l-2 border-t-2 border-r border-b border-[#7f7b6c] border-r-white border-b-white bg-[#ece9d8]">
      <SysToolbar />
      <div className="flex h-[218px] shrink-0 pt-[6px]">
        <div className="flex h-[212px] w-[48px] shrink-0 flex-col items-end justify-between pr-[11px]">
          {["100", "90", "80", "70", "60", "50", "40", "30", "20", "10", "0"].map((n) => (
            <span key={n} className="flex h-[14px] items-center"><T w={n.length * 6}>{n}</T></span>
          ))}
        </div>
        <Chart />
      </div>
      <div className="mt-[2px] flex h-[15px] shrink-0 items-center justify-end pr-[10px]">
        {stats.map(([l, lw, v, vw, ml]) => (
          <React.Fragment key={l}>
            <T w={lw} className={ml}>{l}</T>
            <span className="ml-[4px] flex h-[15px] w-[90px] items-center justify-end border border-b-white border-l-[#aca899] border-r-white border-t-[#aca899] pr-px"><T w={vw}>{v}</T></span>
          </React.Fragment>
        ))}
      </div>
      <div className="ml-[10px] mt-[10px] w-[1188px]">
        <div className="flex h-[20px] border border-b-2 border-black">
          {heads.map(([h, w], i) => (
            <div key={h} className={`flex shrink-0 items-center border-r border-b border-r-[#716f64] border-b-[#aca899] pl-[5px] ${cols[i]}`}><T w={w}>{h}</T></div>
          ))}
          <div className="flex-1 border-b border-[#aca899]" />
        </div>
        <div className="h-[63px] border-2 border-t-0 border-[#f6f4ea] bg-white pt-px">
          {rows.map(([c, cells], i) => (
            <div key={c} className={`flex h-[15px] items-center pl-[3px] ${i === 3 ? "border border-dotted border-black bg-[#316ac5] pl-[2px] text-white" : ""}`}>
              <svg className="shrink-0" width="43" height="2"><path d="M0 .5h39" stroke={c} shapeRendering="crispEdges" /></svg>
              {cells.map(([t, w], k) => <span key={k} className={`shrink-0 ${cols[k + 1]}`}><T w={w}>{t}</T></span>)}
            </div>
          ))}
        </div>
      </div>
    </div>
  );
}

const pmenu = [["File", 17, "w-[33px]"], ["Action", 30, "w-[46px]"], ["View", 22, "w-[38px]"], ["Favorites", 45, "w-[61px]"], ["Window", 38, "w-[54px]"], ["Help", 21, "w-[30px]"]];

function Mdi({ kind }) {
  return (
    <span className="flex h-[15px] w-[16px] items-center justify-center border border-b-[#716f64] border-l-white border-r-[#716f64] border-t-white bg-[#ece9d8]">
      <svg width="12" height="11" stroke="#000" fill="none" shapeRendering="crispEdges">
        {kind === "min" && <path d="M2 9h6" strokeWidth="2" />}
        {kind === "restore" && <path d="M4 1.500h7M4.500 1v3M10.500 1v6M8 6.500h3M1 4.500h7M1 5.500h7M1.500 5v5M7.500 5v5M1 9.500h7" />}
        {kind === "close" && <path d="M2.500 1.500l7 8M9.500 1.500l-7 8" strokeWidth="2" />}
      </svg>
    </span>
  );
}

function Performance() {
  return (
    <div className={`absolute left-[309px] top-[433px] flex h-[480px] w-[1417px] flex-col overflow-hidden rounded-t-[7px] border-b border-[#001090] bg-[#0847dd] text-black ${TAHOMA}`}>
      <div className="flex h-[30px] shrink-0 items-center bg-linear-to-b from-[#1c7afc] via-[#0054e3] via-25% to-[#0465fb] pl-[7px] pr-[6px] pt-[3px]">
        <PerfLogo />
        <T w={80} className="ml-[2px] text-[12.5px] font-bold text-white [text-shadow:1px_1px_0_#0a1883]">Performance</T>
        <div className="ml-auto flex gap-[2px]"><Cap kind="min" /><Cap kind="max" /><Cap kind="close" /></div>
      </div>
      <div className="mx-[4px] flex h-[446px] shrink-0 flex-col bg-[#ece9d8]">
        <div className="flex h-[23px] shrink-0 items-center border-b border-[#d8d2bd] bg-linear-to-r from-[#fbfbf9] to-[#ece8d7] pl-[2px]">
          <PerfLogo />
          <div className="ml-[7px] flex">{pmenu.map(([m, w, box]) => <span key={m} className={box}><T w={w}>{m}</T></span>)}</div>
          <div className="ml-auto flex h-full items-center border-l border-[#d8d2bd] bg-[#f1eee2] pl-[3px] pr-[3px]"><Mdi kind="min" /><Mdi kind="restore" /><span className="ml-[2px]"><Mdi kind="close" /></span></div>
        </div>
        <div className="flex h-[24px] shrink-0 items-center border-b border-t border-b-[#d0ccb9] border-t-white bg-linear-to-r from-[#f9f8f4] to-[#ebe6d0] pl-[6px]">
          <Arrow /><span className="ml-[11px]"><Arrow flip /></span>
          <span className="ml-[8px] h-[20px] w-px bg-[#c8c4b2]" />
          <span className="ml-[7px]"><Folder up /></span>
          <span className="ml-[3px]"><Btn on><Pane /></Btn></span>
          <span className="ml-[4px] h-[20px] w-px bg-[#c8c4b2]" />
          <span className="ml-[7px]"><HelpDoc /></span>
          <span className="ml-[6px]"><Pane flip /></span>
        </div>
        <div className="flex h-[375px] shrink-0 items-start gap-[2px] pl-px pt-[5px]">
          <div className="h-[370px] w-[194px] shrink-0 border border-[#7f9db9] bg-white pl-[4px] pt-px">
            <div className="flex h-[16px] items-center"><Folder /><T w={65} className="ml-[4px]">Console Root</T></div>
            <div className="flex h-[16px] items-center">
              <svg width="36" height="16" viewBox="0 0 36 16" fill="none" shapeRendering="crispEdges"><path d="M7.500 0v16M8 8.500h10" stroke="#999" strokeDasharray="1 1" /><path d="M21.500 7.500h12v8h-12z" fill="#b8b8b8" stroke="#000" /><path d="M22 8.500h11" stroke="#eee" /><path d="M28 3v4M17 8h4M18 12h4" stroke="#333" strokeWidth="1.500" /><circle cx="28.500" cy="2" r="1.500" stroke="#333" /></svg>
              <span className="ml-px flex h-[16px] items-center bg-[#ece9d8] pl-px pr-[5px]"><T w={75}>System Monitor</T></span>
            </div>
            <div className="flex h-[16px] items-center">
              <svg width="36" height="16" viewBox="0 0 36 16" fill="none" shapeRendering="crispEdges"><path d="M7.500 0v4M12 8.500h6" stroke="#999" strokeDasharray="1 1" /><rect x="3.500" y="4.500" width="8" height="8" fill="#f6f5ee" stroke="#7898b5" /><path d="M5 8.500h5M7.500 6v5" stroke="#000" /><path d="M20.500 1.500h12v12h-12z" fill="#fff" stroke="#000" /><path d="M22 4l3 3 3-4 2 4" stroke="#00c" strokeWidth="1.500" /><path d="M29 9l2-5" stroke="#e00" strokeWidth="1.500" /><circle cx="23.500" cy="11" r="3.500" fill="#c8b400" stroke="#000" strokeDasharray="2 1" strokeWidth="1.500" /></svg>
              <T w={139} className="ml-[2px]">Performance Logs and Alerts</T>
            </div>
          </div>
          <SystemMonitor />
        </div>
        <div className="flex h-[24px] shrink-0 items-center justify-end border-t-2 border-[#b8b4a4] bg-linear-to-b from-[#e6e3d2] via-[#efecdc] to-[#dcd8c4] pr-[2px]">
          <span className="h-[17px] w-[2px] border-l border-[#c0bca8] bg-white" />
          <span className="ml-[131px] h-[17px] w-[2px] border-l border-[#c0bca8] bg-white" />
          <span className="ml-[83px] h-[17px] w-[2px] border-l border-[#c0bca8] bg-white" />
        </div>
      </div>
    </div>
  );
}

/* ---------- browser behind ---------- */
const bmenu = [["File", 17, "w-[32px]"], ["Edit", 19, "w-[34px]"], ["View", 22, "w-[38px]"], ["History", 35, "w-[50px]"], ["Bookmarks", 52, "w-[67px]"], ["Tools", 25, "w-[40px]"], ["Help", 22, "w-[30px]"]];
const Row = ({ children }) => (
  <div className="ml-[7px] h-[50px] w-[600px] border border-dotted border-[#888] bg-[#eee] pl-[5px] pt-px text-[15px] leading-[24px]">{children}</div>
);

function Browser() {
  return (
    <div className={`flex h-[918px] w-[1919px] flex-col bg-white ${SERIF}`}>
      <div className="flex h-[57px] shrink-0 justify-between border-b border-[#4a5890] bg-linear-to-b from-[#95b2ea] via-[#7a96df] via-15% to-[#80a8ea]">
        <div className={`flex h-[18px] items-center pl-[6px] text-[#dbe4f8] ${TAHOMA}`}>
          {bmenu.map(([m, w, box]) => <span key={m} className={box}><T w={w}>{m === "File" ? <><span className="underline underline-offset-2">F</span>ile</> : m}</T></span>)}
        </div>
        <div className="flex gap-[2px] pr-[2px] pt-px"><Cap kind="none" faded /><Cap kind="restore" faded /><Cap kind="close" faded /></div>
      </div>
      <div className="flex h-[41px] shrink-0 items-center justify-between border-b border-[#aaa798] bg-linear-to-b from-[#f3f1e4] to-[#e8e4d0] pl-[4px] pr-[13px]">
        <svg width="32" height="32" viewBox="0 0 32 32" fill="none"><circle cx="16" cy="16" r="15.500" fill="#f3f1e8" stroke="#96948a" /><circle cx="11" cy="16" r="3" fill="#444" /></svg>
        <svg width="16" height="14" viewBox="0 0 16 14" stroke="#55503f" strokeWidth="3" strokeLinecap="round"><path d="M1 1.500h14M1 6.500h14M1 11.500h14" /></svg>
      </div>
      <div className="ml-[7px] mt-[9px] h-[19px] text-[16px] leading-[19px] text-[#0000ee] underline">Acme</div>
      <div className="ml-[7px] mt-px h-[36px] w-[20px] bg-[#302c30]" />
      <div className="ml-[7px] h-[20px] pt-[2px] text-[16px] leading-[18px] text-[#0000ee] underline">en | es</div>
      <div className="ml-[8px] mt-[25px] h-[34px] text-[24px] italic leading-[34px]">Actor</div>
      <div className="ml-[7px] mt-[18px] h-[49px] text-[24px] font-bold leading-[30px]">C</div>
      <Row><div>C</div><div>I</div></Row>
      <div className="ml-[7px] mt-[15px] h-[56px] w-[600px] border border-[#666] p-[2px] text-[15px]"><div className="h-[24px] bg-[#ffcc00] pl-[4px] leading-[24px]">C</div><div className="pl-[4px] leading-[26px]">C</div></div>
      <div className="ml-[7px] mt-[16px] h-[51px] text-[24px] font-bold leading-[34px]">H</div>
      <Row><div>C</div><div>I</div></Row>
      <div className="ml-[7px] mt-[15px] h-[56px] w-[600px] border border-[#666] p-[2px] text-[16px]"><div className="h-[24px] bg-[#ffcc00] pl-[4px] leading-[24px]">I</div><div className="pl-[4px] leading-[29px]"><T w={48}>Antonio</T></div></div>
      <div className="ml-[8px] mt-[40px] flex gap-[5px] font-['Noto_Sans',sans-serif] text-[13px] text-[#111]">
        <div className="flex h-[24px] w-[67px] items-center justify-center rounded-[3px] border border-[#003c74] bg-linear-to-b from-white to-[#e8e7df]"><T w={44}>Refresh</T></div>
        <div className="flex h-[24px] w-[48px] items-center justify-center rounded-[3px] border border-[#003c74] bg-linear-to-b from-white to-[#e8e7df]"><T w={27}>Back</T></div>
      </div>
      <div className="ml-[7px] mr-[8px] mt-[8px] h-[2px] border-b border-t border-b-[#bbb] border-t-[#555]" />
      <div className="ml-[7px] mt-[8px] text-[16px] font-bold leading-[20px] text-[#111]"><T w={318}>Copyright © 2019 Acme Hacker-Rank Co., Inc.</T></div>
      <div className="mt-auto h-[2px] bg-[#3a7bcc]" />
    </div>
  );
}

export default function App() {
  return (
    <div className="relative h-[918px] w-[1919px] overflow-hidden leading-[14px]">
      <Browser />
      <JMeter />
      <Performance />
    </div>
  );
}
